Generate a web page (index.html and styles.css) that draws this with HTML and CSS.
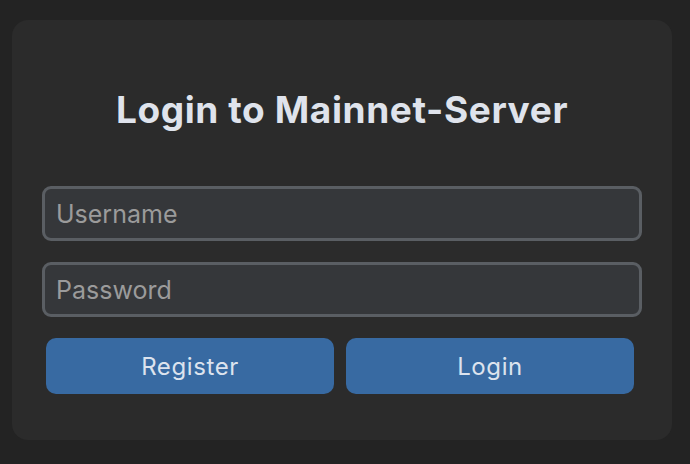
FILE: index.html
```html
<!DOCTYPE html>
<html>
<head>
<meta charset="utf-8">
<link rel="stylesheet" href="styles.css">
</head>
<body>
<div class="card">
  <h1 class="title">Login to Mainnet-Server</h1>
  <form class="form">
    <input class="field" type="text" placeholder="Username">
    <input class="field" type="password" placeholder="Password">
    <div class="actions">
      <button type="button" class="btn">Register</button>
      <button type="button" class="btn">Login</button>
    </div>
  </form>
</div>
</body>
</html>
```
FILE: styles.css
```css
html, body {
  margin: 0;
  padding: 0;
  background: #232323;
  font-family: Inter, "Noto Sans", sans-serif;
}
body {
  padding: 20px 18px 24px 12px;
}
.card {
  background: #2b2b2b;
  border-radius: 16px;
  width: 660px;
  height: 420px;
  box-sizing: border-box;
  padding: 0 30px;
  display: flex;
  flex-direction: column;
}
.title {
  margin: 68px 0 0;
  height: 44px;
  line-height: 44px;
  text-align: center;
  color: #dfe3ec;
  font-size: 37px;
  font-weight: 700;
  letter-spacing: 0.6px;
}
.form {
  margin-top: 54px;
  display: flex;
  flex-direction: column;
}
.field {
  height: 55px;
  box-sizing: border-box;
  background: #35373a;
  border: 3px solid #5a5e63;
  border-radius: 9px;
  padding: 0 11px;
  font-family: inherit;
  font-size: 25px;
  color: #dfe3ec;
  outline: none;
  margin-bottom: 21px;
}
.field::placeholder {
  color: #9b9b9b;
}
.field:last-of-type {
  margin-bottom: 0;
}
.actions {
  margin-top: 21px;
  padding-left: 4px;
  display: flex;
  gap: 12px;
}
.btn {
  width: 288px;
  height: 56px;
  border: none;
  border-radius: 10px;
  background: #386aa2;
  color: #dce3ee;
  font-family: inherit;
  font-size: 24px;
  font-weight: 400;
  letter-spacing: 0.6px;
}
```
